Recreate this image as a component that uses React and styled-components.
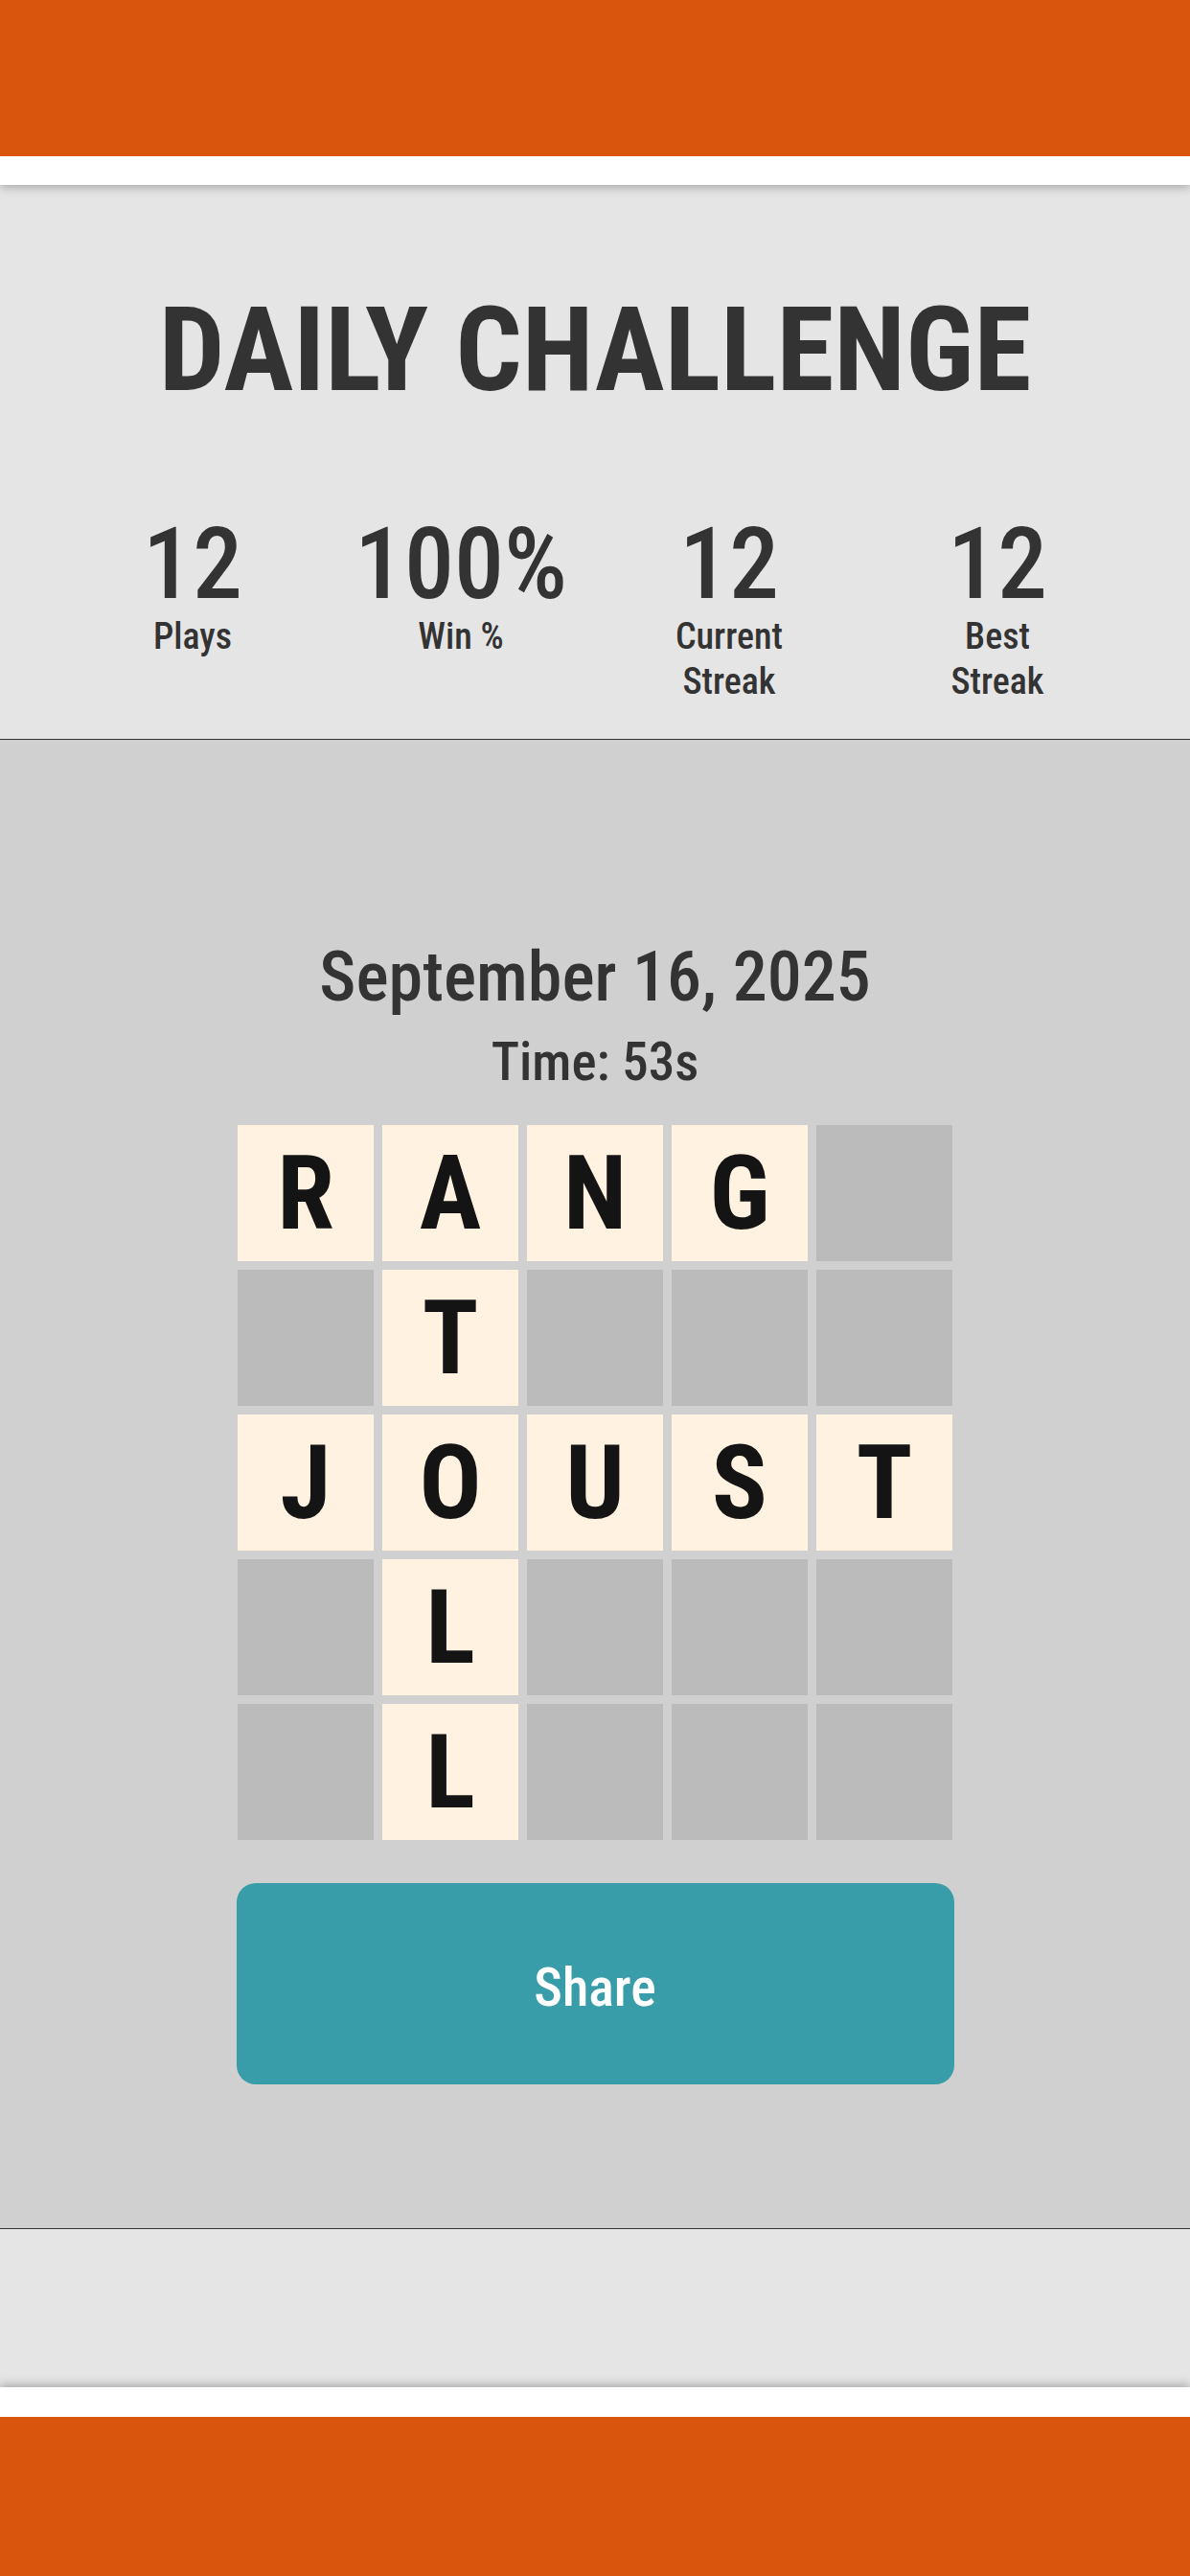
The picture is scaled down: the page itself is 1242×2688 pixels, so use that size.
import React from 'react';
import styled, { createGlobalStyle } from 'styled-components';

const GlobalStyle = createGlobalStyle`
    html, body {
        margin: 0;
        padding: 0;
        background: #d0d0d0;
    }
    body {
        font-family: "Roboto Condensed", Roboto, "Liberation Sans Narrow", sans-serif;
        font-stretch: condensed;
        color: #333333;
    }
`;

const Page = styled.div`
    display: flex;
    flex-direction: column;
    min-height: 100vh;
`;

const Bar = styled.div`
    position: relative;
    z-index: 2;
    height: ${({ $bottom }) => $bottom ? '166px' : '163px'};
    background: #d9550e;
    border-${({ $bottom }) => $bottom ? 'top' : 'bottom'}: ${({ $bottom }) => $bottom ? '31px' : '30px'} solid #ffffff;
    box-shadow: 0 ${({ $bottom }) => $bottom ? '-3px' : '3px'} 9px rgba(0, 0, 0, 0.25);
`;

const Header = styled.header`
    height: 579px;
    box-sizing: border-box;
    padding-top: 100px;
    background: #e5e5e5;
    border-bottom: 1px solid #333333;
    text-align: center;
`;

const Title = styled.h1`
    margin: 0;
    font-size: 122px;
    font-weight: 700;
    line-height: 1.2;
    color: #333333;
`;

const Stats = styled.div`
    display: grid;
    grid-template-columns: repeat(4, 1fr);
    padding: 0 61px;
    margin-top: 98px;
`;

const Stat = styled.div`
    display: flex;
    flex-direction: column;
    align-items: center;
`;

const StatValue = styled.div`
    font-size: 104px;
    font-weight: 500;
    line-height: 104px;
`;

const StatLabel = styled.div`
    font-size: 38px;
    font-weight: 500;
    line-height: 46.7px;
    text-align: center;
`;

const Main = styled.main`
    flex: 1;
    display: flex;
    flex-direction: column;
    align-items: center;
    padding-top: 205px;
    background: #d0d0d0;
`;

const DateLine = styled.div`
    font-size: 72px;
    font-weight: 500;
    line-height: 1.2;
`;

const TimeLine = styled.div`
    margin-top: 12px;
    font-size: 55px;
    font-weight: 500;
    line-height: 1.2;
`;

const Grid = styled.div`
    display: grid;
    grid-template-columns: repeat(5, 142px);
    grid-auto-rows: 142px;
    gap: 9px;
    margin-top: 33px;
`;

const Tile = styled.div`
    display: flex;
    align-items: center;
    justify-content: center;
    background: ${({ $filled }) => $filled ? '#fff2e0' : '#bbbbbb'};
    color: #141414;
    font-size: 108px;
    font-weight: 700;
    line-height: 1;
`;

const ShareButton = styled.button`
    width: 749px;
    height: 210px;
    margin-top: 45px;
    padding: 8px 0 0;
    border: none;
    border-radius: 20px;
    background: #389da9;
    color: #ffffff;
    font-family: inherit;
    font-stretch: inherit;
    font-size: 56px;
    font-weight: 500;
    cursor: pointer;
`;

const Footer = styled.footer`
    height: 166px;
    box-sizing: border-box;
    background: #e5e5e5;
    border-top: 1px solid #333333;
`;

const stats = [
    { value: '12', label: 'Plays' },
    { value: '100%', label: 'Win %' },
    { value: '12', label: ['Current', 'Streak'] },
    { value: '12', label: ['Best', 'Streak'] },
];

const board = [
    'RANG ',
    ' T   ',
    'JOUST',
    ' L   ',
    ' L   ',
];

const App = () => {
    return (
        <Page>
            <GlobalStyle />
            <Bar />

            {/* TITLE AND STATS */}
            <Header>
                <Title>DAILY CHALLENGE</Title>
                <Stats>
                    {
                        stats.map((stat, i) => (
                            <Stat key={i}>
                                <StatValue>{stat.value}</StatValue>
                                <StatLabel>
                                    {Array.isArray(stat.label)
                                        ? stat.label.map(line => <div key={line}>{line}</div>)
                                        : stat.label}
                                </StatLabel>
                            </Stat>
                        ))
                    }
                </Stats>
            </Header>

            {/* RESULT BOARD */}
            <Main>
                <DateLine>September 16, 2025</DateLine>
                <TimeLine>Time: 53s</TimeLine>
                <Grid>
                    {
                        board.map((row, r) => row.split('').map((ch, c) => (
                            <Tile key={`${r}-${c}`} $filled={ch !== ' '}>{ch.trim()}</Tile>
                        )))
                    }
                </Grid>
                <ShareButton>Share</ShareButton>
            </Main>

            <Footer />
            <Bar $bottom />
        </Page>
    )
}

export default App;
